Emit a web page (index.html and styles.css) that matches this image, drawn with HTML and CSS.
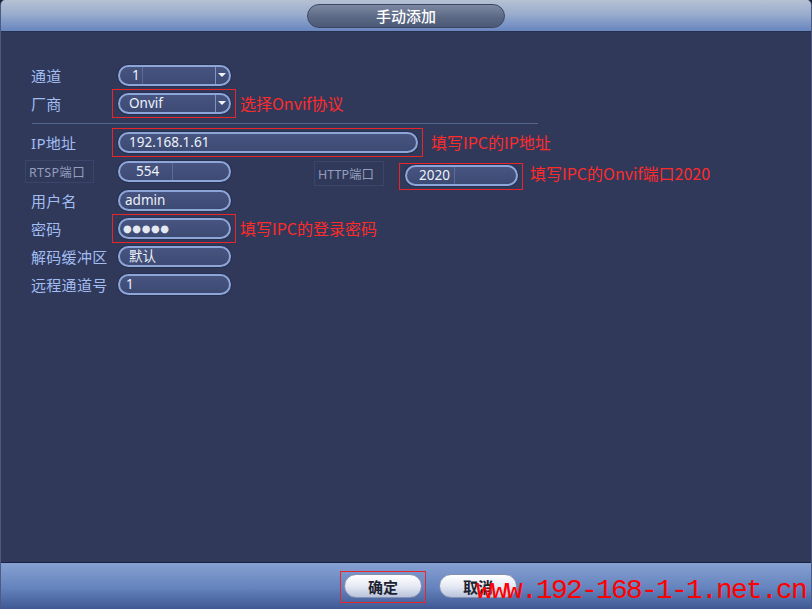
FILE: index.html
```html
<!DOCTYPE html>
<html lang="zh-CN">
<head>
    <meta charset="UTF-8">
    <meta name="viewport" content="width=device-width, initial-scale=1.0">
    <title>手动添加</title>
    <link rel="stylesheet" href="styles.css">
</head>
<body>
    <div class="dialog">
        <div class="titlebar">
            <div class="title">手动添加</div>
        </div>

        <div class="content">
            <div class="row">
                <span class="label">通道</span>
                <div class="field select">
                    <span class="inner chan-val">1</span>
                    <span class="arrow"></span>
                </div>
            </div>
            <div class="row">
                <span class="label">厂商</span>
                <span class="mark">
                    <div class="field select">
                        <span class="val">Onvif</span>
                        <span class="arrow"></span>
                    </div>
                </span>
                <span class="note">选择Onvif协议</span>
            </div>

            <div class="sep"></div>

            <div class="row">
                <span class="label">IP地址</span>
                <span class="mark mark-ip">
                    <div class="field wide"><span class="val">192.168.1.61</span></div>
                </span>
                <span class="note">填写IPC的IP地址</span>
            </div>
            <div class="row row-port">
                <span class="label"><span class="lbox lbox-rtsp">RTSP端口</span></span>
                <div class="field"><span class="inner rtsp-val">554</span></div>
                <span class="lbox lbox-http">HTTP端口</span>
                <span class="mark mark-http">
                    <div class="field"><span class="inner http-val">2020</span></div>
                </span>
                <span class="note note-http">填写IPC的Onvif端口2020</span>
            </div>
            <div class="row">
                <span class="label">用户名</span>
                <div class="field"><span class="val val-user">admin</span></div>
            </div>
            <div class="row">
                <span class="label">密码</span>
                <span class="mark">
                    <div class="field"><span class="val dots">●●●●●</span></div>
                </span>
                <span class="note">填写IPC的登录密码</span>
            </div>
            <div class="row">
                <span class="label">解码缓冲区</span>
                <div class="field"><span class="val">默认</span></div>
            </div>
            <div class="row">
                <span class="label">远程通道号</span>
                <div class="field"><span class="val val-remote">1</span></div>
            </div>
        </div>

        <div class="footer">
            <span class="mark mark-btn">
                <button type="button" class="btn">确定</button>
            </span>
            <button type="button" class="btn">取消</button>
            <span class="watermark">www.192-168-1-1.net.cn</span>
        </div>
    </div>
</body>
</html>
```

FILE: styles.css
```css
html {
    background-color: #1c2134;
}
body {
    margin: 0;
    font-family: "Noto Sans", "Noto Sans CJK SC", sans-serif;
}
.dialog {
    width: 812px;
    height: 609px;
    box-sizing: border-box;
    display: flex;
    flex-direction: column;
    background-color: #30395a; /* dark navy panel */
    border-left: 1px solid #4d5a82;
    border-right: 1px solid #4d5a82;
    border-radius: 5px 5px 0 0;
    overflow: hidden;
}

/* title bar */
.titlebar {
    height: 32px;
    box-sizing: border-box;
    padding-top: 4px;
    display: flex;
    justify-content: center;
    align-items: flex-start;
    background: linear-gradient(#b6c1d3, #9aadcd 45%, #6785bf);
    border-bottom: 1px solid #27304c;
}
.title {
    width: 198px;
    height: 24px;
    box-sizing: border-box;
    border: 1px solid #3d4763;
    border-radius: 12px;
    background: linear-gradient(#7d89a1, #5c6985 55%, #4b5877);
    color: #ffffff;
    font-family: "Noto Sans CJK SC", sans-serif;
    font-size: 15px;
    font-weight: 500;
    line-height: 22px;
    text-align: center;
}

/* form area */
.content {
    flex: 1;
    padding: 29px 0 0 30px;
}
.row {
    height: 28px;
    display: flex;
    align-items: center;
}
.row-port {
    height: 30px;
}
.label {
    width: 87px;
    flex-shrink: 0;
    color: #a2bdf2;
    font-size: 15px;
    letter-spacing: 0.3px;
    font-family: "Noto Sans", "Noto Sans CJK SC", sans-serif;
}
.sep {
    width: 506px;
    height: 1px;
    margin: 6px 0 4px 1px;
    background-color: #56658d;
}

.field {
    width: 113px;
    height: 21px;
    box-sizing: border-box;
    display: flex;
    align-items: center;
    border: 2px solid #8ea5d8;
    border-radius: 11px;
    background: linear-gradient(#46547f, #3d4a74);
    box-shadow: 0 0 0 1px #263050;
    color: #eef2fa;
    font-size: 13.5px;
    flex-shrink: 0;
}
.field.wide {
    width: 300px;
}
.val {
    padding-left: 9px;
    line-height: 17px;
}
.val-user {
    padding-left: 5px;
}
.val-remote {
    padding-left: 6px;
}
.dots {
    padding-left: 3px;
    font-family: "DejaVu Sans", sans-serif;
    font-size: 10px;
    letter-spacing: 0.6px;
    color: #e4e8f0;
}
.inner {
    height: 17px;
    line-height: 17px;
    box-sizing: border-box;
    border-right: 1px solid rgba(140, 160, 205, 0.35);
}
.chan-val {
    width: 23px;
    padding-left: 12px;
}
.rtsp-val {
    width: 53px;
    padding-left: 16px;
}
.http-val {
    width: 48px;
    padding-left: 12px;
}

/* dropdown */
.select .val {
    flex: 1;
}
.select .inner {
    flex: 0 0 auto;
}
.select .arrow {
    margin-left: auto;
    width: 14px;
    height: 17px;
    box-sizing: border-box;
    border-left: 1px solid #7f93c2;
    display: flex;
    align-items: center;
    justify-content: center;
}
.select .arrow::after {
    content: "";
    border-left: 4px solid transparent;
    border-right: 4px solid transparent;
    border-top: 4px solid #f2f4fa;
    margin-right: 1px;
}

/* small gray port labels */
.lbox {
    display: flex;
    align-items: center;
    box-sizing: border-box;
    border: 1px solid #3b4569;
    color: #959fbd;
    font-size: 12.5px;
}
.lbox-rtsp {
    width: 69px;
    height: 23px;
    margin-left: -6px;
    padding-left: 3px;
}
.lbox-http {
    width: 70px;
    height: 25px;
    margin-left: 83px;
    padding-left: 3px;
    align-self: flex-end;
}

/* red annotations */
.mark {
    display: flex;
    flex-shrink: 0;
    border: 1px solid #e8262a;
    padding: 3px 4px 3px 5px;
    margin: -4px -5px -4px -6px;
}
.mark-http {
    align-self: flex-end;
    margin: 0 -5px -4px 15px;
    padding: 1px 4px 3px 5px;
}
.note {
    margin-left: 9px;
    color: #ff2b2b;
    font-family: "Noto Sans CJK SC", sans-serif;
    font-size: 16px;
    white-space: nowrap;
}
.mark-ip + .note {
    margin-left: 13px;
}
.note-http {
    margin-left: 12px;
    align-self: flex-end;
    margin-bottom: 1px;
}

/* bottom bar */
.footer {
    position: relative;
    height: 47px;
    box-sizing: border-box;
    padding-left: 343px;
    display: flex;
    align-items: center;
    gap: 17px;
    background: linear-gradient(#86a1d2, #6482bd 55%, #3e5892);
    border-top: 1px solid #1b2140;
}
.mark-btn {
    padding: 2px 3px 4px 3px;
    margin: -3px -4px -5px -4px;
}
.btn {
    width: 78px;
    height: 24px;
    padding: 0;
    border: 1px solid #8590b2;
    border-radius: 12px;
    background: linear-gradient(#ffffff, #e6eaf4 50%, #b9c3dc);
    color: #1d2331;
    font-family: "Noto Sans CJK SC", sans-serif;
    font-size: 15px;
    font-weight: bold;
    cursor: pointer;
}
.watermark {
    position: absolute;
    left: 475px;
    top: 14px;
    color: #ff0000;
    font-family: "Liberation Mono", monospace;
    font-size: 28px;
    line-height: 28px;
    letter-spacing: -1.8px;
    white-space: nowrap;
}
```
